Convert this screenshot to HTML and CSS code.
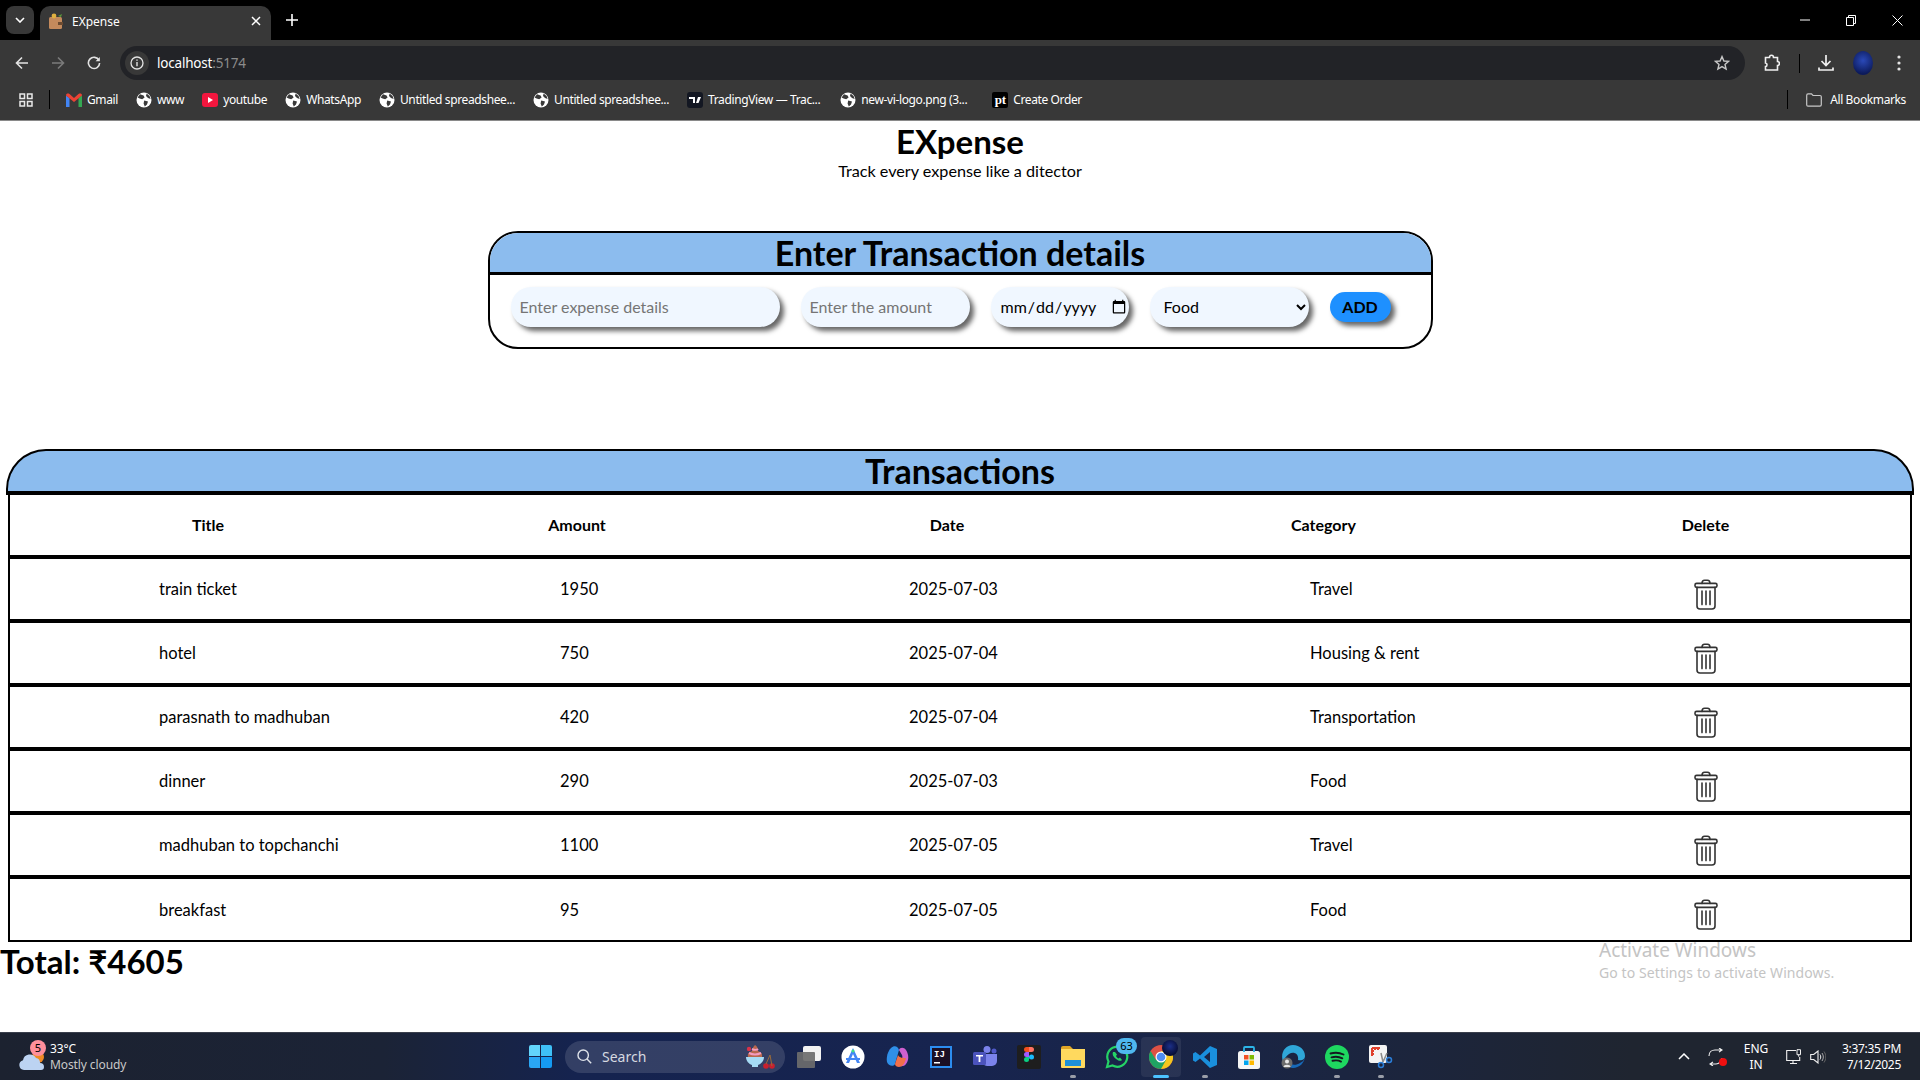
FILE: index.html
```html
<!DOCTYPE html>
<html lang="en">

<head>
  <meta charset="UTF-8">
  <meta name="viewport" content="width=device-width, initial-scale=1.0">
  <title>EXpense</title>
  <link rel="stylesheet" href="styles.css">
</head>

<body>
  <svg class="defs" width="0" height="0">
    <symbol id="globe" viewBox="0 0 16 16">
      <circle cx="8" cy="8" r="7.5" fill="#fff" />
      <path d="M4 2.2 7.6 3.4 8.6 5.6 6.2 7.2 3.6 6.6 1.6 5.6ZM8.2 8.4 12 9.4 11 12.6 8.8 14.6 7.6 11.4ZM10.6 1.6 13.6 4 14.6 7 12 6 10 4Z" fill="#3a3a3a" />
    </symbol>
    <symbol id="trash" viewBox="0 0 24 31">
      <g fill="none" stroke="#333" stroke-width="1.6" stroke-linecap="round" stroke-linejoin="round">
        <path d="M8 4.4C8 2.4 9 1.2 10.6 1.2h2.8C15 1.2 16 2.4 16 4.4" />
        <rect x="1" y="4.4" width="22" height="4" rx="1.6" />
        <path d="M3 8.4V27c0 1.8 1.2 3 3 3h12c1.8 0 3-1.2 3-3V8.4" />
        <path d="M8 12v13.6M12 12v13.6M16 12v13.6" />
      </g>
    </symbol>
  </svg>

  <header class="browser">
    <div class="tabstrip">
      <button class="tab-search">
        <svg width="10" height="6" viewBox="0 0 10 6"><path d="M1 1l4 4 4-4" fill="none" stroke="#fff" stroke-width="1.6" /></svg>
      </button>
      <div class="tab">
        <svg class="favicon" width="14" height="16" viewBox="0 0 14 16">
          <rect x="0" y="4" width="13" height="12" rx="1.5" fill="#c48a5c" />
          <rect x="9" y="9" width="5" height="3" fill="#6b4a30" />
          <circle cx="5" cy="3" r="2.4" fill="#e0b040" />
          <path d="M9 3l4-2-1 3z" fill="#5a9a3a" />
        </svg>
        <span class="tab-title">EXpense</span>
        <svg class="tab-close" width="10" height="10" viewBox="0 0 10 10"><path d="M1 1l8 8M9 1L1 9" stroke="#fff" stroke-width="1.5" /></svg>
      </div>
      <svg class="tab-new" width="12" height="12" viewBox="0 0 12 12"><path d="M6 0v12M0 6h12" stroke="#fff" stroke-width="1.6" /></svg>
      <div class="win-controls">
        <svg width="10" height="2" viewBox="0 0 10 2"><path d="M0 1h10" stroke="#fff" /></svg>
        <svg width="10" height="11" viewBox="0 0 10 11"><path d="M.5 2.5h7v8h-7zM2.5 2.5V.5h7v8h-2" fill="none" stroke="#fff" /></svg>
        <svg width="11" height="11" viewBox="0 0 11 11"><path d="M.5.5l10 10M10.5.5l-10 10" stroke="#fff" /></svg>
      </div>
    </div>

    <div class="toolbar">
      <svg class="nav-icon" width="14" height="14" viewBox="0 0 14 14"><path d="M13 7H2M7 1.5 1.5 7 7 12.5" fill="none" stroke="#e3e3e3" stroke-width="1.6" /></svg>
      <svg class="nav-icon" width="14" height="14" viewBox="0 0 14 14"><path d="M1 7h11M7 1.5 12.5 7 7 12.5" fill="none" stroke="#7b7b7b" stroke-width="1.6" /></svg>
      <svg class="nav-icon" width="14" height="14" viewBox="0 0 14 14"><path d="M12 4.4A5.6 5.6 0 1 0 12.6 7" fill="none" stroke="#e3e3e3" stroke-width="1.6" /><path d="M12.8 1v4.2H8.6z" fill="#e3e3e3" /></svg>
      <div class="omnibox">
        <span class="site-info">
          <svg width="14" height="14" viewBox="0 0 14 14"><circle cx="7" cy="7" r="6" fill="none" stroke="#e3e3e3" stroke-width="1.3" /><path d="M7 6v4.2M7 3.6v1.2" stroke="#e3e3e3" stroke-width="1.4" /></svg>
        </span>
        <span class="url">localhost<span class="url-port">:5174</span></span>
        <svg class="star" width="16" height="16" viewBox="0 0 16 16"><path d="M8 1.6 9.9 6l4.700.4-3.600 3.100 1.100 4.600L8 11.600l-4.100 2.500 1.100-4.600L1.400 6.400 6.100 6z" fill="none" stroke="#c7c7c7" stroke-width="1.4" /></svg>
      </div>
      <div class="toolbar-actions">
        <svg class="act-ext" width="16" height="18" viewBox="0 0 16 18"><path d="M1.500 3.500h4c0-3 4-3 4 0h4v4c2.500 0 2.500 4 0 4v4.500h-12v-3.500c2 0 2-3.500 0-3.500z" fill="none" stroke="#f0f0f0" stroke-width="1.6" /></svg>
        <span class="act-sep"></span>
        <svg class="act-down" width="16" height="18" viewBox="0 0 16 18"><path d="M8 1v10M3.500 7 8 11.500 12.500 7M1 13.500v2.500h14v-2.500" fill="none" stroke="#f0f0f0" stroke-width="1.7" /></svg>
        <span class="avatar"></span>
        <svg class="act-more" width="4" height="16" viewBox="0 0 4 16"><circle cx="2" cy="2" r="1.6" fill="#e3e3e3" /><circle cx="2" cy="8" r="1.6" fill="#e3e3e3" /><circle cx="2" cy="14" r="1.6" fill="#e3e3e3" /></svg>
      </div>
    </div>

    <nav class="bookmarks">
      <svg class="bm-apps" width="14" height="14" viewBox="0 0 14 14"><path d="M1 1h4.500v4.500H1zM8.500 1H13v4.500H8.500zM1 8.500h4.500V13H1zM8.500 8.500H13V13H8.500z" fill="none" stroke="#e8e8e8" stroke-width="1.5" /></svg>
      <span class="bm-sep"></span>
      <a class="bm">
        <svg width="16" height="14" viewBox="0 0 16 14"><path d="M0 2.500V14h3.500V5z" fill="#4285f4" /><path d="M16 2.500V14h-3.500V5z" fill="#34a853" /><path d="M0 2.500C0 .5 2 0 3.500 1L8 5l4.500-4C14 0 16 .5 16 2.500L8 9z" fill="#ea4335" /></svg>
        Gmail
      </a>
      <a class="bm"><svg width="16" height="16"><use href="#globe" /></svg>www</a>
      <a class="bm">
        <svg width="16" height="14" viewBox="0 0 16 14"><rect width="16" height="14" rx="3" fill="#f2163e" /><path d="M6 4l5 3-5 3z" fill="#fff" /></svg>
        youtube
      </a>
      <a class="bm"><svg width="16" height="16"><use href="#globe" /></svg>WhatsApp</a>
      <a class="bm"><svg width="16" height="16"><use href="#globe" /></svg>Untitled spreadshee...</a>
      <a class="bm"><svg width="16" height="16"><use href="#globe" /></svg>Untitled spreadshee...</a>
      <a class="bm">
        <svg width="16" height="16" viewBox="0 0 16 16"><rect width="16" height="16" rx="3" fill="#131722" /><path d="M2 5h6v6H6V7H2zM11 5h3l-2.500 6H9z" fill="#fff" /></svg>
        TradingView — Trac...
      </a>
      <a class="bm bm-vi"><svg width="16" height="16"><use href="#globe" /></svg>new-vi-logo.png (3...</a>
      <a class="bm bm-pt">
        <span class="pt-logo">pt</span>
        Create Order
      </a>
      <span class="bm-sep bm-sep-end"></span>
      <a class="bm bm-all">
        <svg width="16" height="14" viewBox="0 0 16 14"><path d="M.7 2.500C.7 1.400 1.300.8 2 .8h3.500L7 2.500h7c.8 0 1.300.6 1.300 1.300v8c0 .8-.6 1.400-1.300 1.400H2c-.8 0-1.300-.6-1.300-1.400z" fill="none" stroke="#c7c7c7" stroke-width="1.2" /></svg>
        All Bookmarks
      </a>
    </nav>
  </header>

  <main class="page">
    <h1 class="app-title">EXpense</h1>
    <p class="app-sub">Track every expense like a ditector</p>

    <section class="form-card">
      <h2 class="form-head">Enter Transaction details</h2>
      <form class="form-row">
        <input class="field field-title" type="text" placeholder="Enter expense details">
        <input class="field field-amount" type="text" placeholder="Enter the amount">
        <input class="field field-date" type="date">
        <select class="field field-cat">
          <option>Food</option>
          <option>Travel</option>
          <option>Transportation</option>
          <option>Housing &amp; rent</option>
        </select>
        <button class="add-btn" type="button">ADD</button>
      </form>
    </section>

    <section class="tx">
      <h2 class="tx-head">Transactions</h2>
      <table class="tx-table">
        <colgroup>
          <col class="col-title">
          <col class="col-amount">
          <col class="col-date">
          <col class="col-cat">
          <col class="col-del">
        </colgroup>
        <thead>
          <tr>
            <th>Title</th>
            <th>Amount</th>
            <th>Date</th>
            <th>Category</th>
            <th>Delete</th>
          </tr>
        </thead>
        <tbody>
          <tr>
            <td>train ticket</td>
            <td>1950</td>
            <td>2025-07-03</td>
            <td>Travel</td>
            <td><svg class="trash" width="24" height="31"><use href="#trash" /></svg></td>
          </tr>
          <tr>
            <td>hotel</td>
            <td>750</td>
            <td>2025-07-04</td>
            <td>Housing &amp; rent</td>
            <td><svg class="trash" width="24" height="31"><use href="#trash" /></svg></td>
          </tr>
          <tr>
            <td>parasnath to madhuban</td>
            <td>420</td>
            <td>2025-07-04</td>
            <td>Transportation</td>
            <td><svg class="trash" width="24" height="31"><use href="#trash" /></svg></td>
          </tr>
          <tr>
            <td>dinner</td>
            <td>290</td>
            <td>2025-07-03</td>
            <td>Food</td>
            <td><svg class="trash" width="24" height="31"><use href="#trash" /></svg></td>
          </tr>
          <tr>
            <td>madhuban to topchanchi</td>
            <td>1100</td>
            <td>2025-07-05</td>
            <td>Travel</td>
            <td><svg class="trash" width="24" height="31"><use href="#trash" /></svg></td>
          </tr>
          <tr>
            <td>breakfast</td>
            <td>95</td>
            <td>2025-07-05</td>
            <td>Food</td>
            <td><svg class="trash" width="24" height="31"><use href="#trash" /></svg></td>
          </tr>
        </tbody>
      </table>
    </section>

    <h2 class="total">Total: ₹4605</h2>

    <div class="activate">
      <div class="activate-big">Activate Windows</div>
      <div class="activate-small">Go to Settings to activate Windows.</div>
    </div>
  </main>

  <footer class="taskbar">
    <div class="weather">
      <svg class="weather-icon" width="26" height="28" viewBox="0 0 26 28">
        <circle cx="19" cy="14" r="6" fill="#f08a24" />
        <path d="M5 27a5 5 0 0 1-1-9.800A7 7 0 0 1 17 15a5 5 0 0 1 4 5 4 4 0 0 1 4 4c0 2-1 3-3 3z" fill="#bcd3f2" />
      </svg>
      <span class="weather-badge">5</span>
      <div class="weather-text">
        <div class="weather-temp">33°C</div>
        <div class="weather-desc">Mostly cloudy</div>
      </div>
    </div>

    <svg class="start" width="23" height="23" viewBox="0 0 23 23">
      <path d="M0 2a2 2 0 0 1 2-2h9v11H0z" fill="#63d5fb" />
      <path d="M12 0h9a2 2 0 0 1 2 2v9H12z" fill="#3fc0f7" />
      <path d="M0 12h11v11H2a2 2 0 0 1-2-2z" fill="#2aa6f4" />
      <path d="M12 12h11v9a2 2 0 0 1-2 2h-9z" fill="#159af2" />
    </svg>

    <div class="search">
      <svg width="15" height="15" viewBox="0 0 15 15"><circle cx="6.2" cy="6.2" r="5.2" fill="none" stroke="#dfe3ea" stroke-width="1.4" /><path d="M10 10l4.200 4.200" stroke="#dfe3ea" stroke-width="1.4" /></svg>
      <span class="search-text">Search</span>
      <svg class="search-art" width="30" height="26" viewBox="0 0 30 26">
        <path d="M1 13h18c0 4-3 7-6 8v2H7v-2c-3-1-6-4-6-8z" fill="#a6dcf5" />
        <path d="M3 13c-1-4 2-5 4-6 0-3 2-5 3-6 2 1 3 3 3 6 2 1 5 2 4 6z" fill="#b8684e" />
        <path d="M4 9c4 2 8 2 12 0M7 5c2 1 5 1 6 0" stroke="#f49cc0" stroke-width="2" fill="none" />
        <circle cx="4" cy="5" r="2.2" fill="#d8324a" />
        <circle cx="21" cy="22" r="2.8" fill="#c8202e" />
        <circle cx="27" cy="22" r="2.8" fill="#c8202e" />
        <path d="M21 20l4-9 2 11" stroke="#9a6a3a" fill="none" />
      </svg>
    </div>

    <div class="tb-apps">
      <span class="tb-app">
        <svg width="24" height="22" viewBox="0 0 24 22"><rect x="6" y="0" width="18" height="15" rx="2" fill="#f2f2f2" /><rect x="0" y="6" width="18" height="16" rx="1" fill="#6d6d6d" opacity=".92" /></svg>
      </span>
      <span class="tb-app">
        <svg width="24" height="24" viewBox="0 0 24 24"><circle cx="12" cy="12" r="11.5" fill="#fff" /><path d="M12 3l7 15h-3l-4-9-4 9H5z" fill="#4285f4" /><path d="M5 13h14v2H5z" fill="#4285f4" /><circle cx="12" cy="6" r="1.5" fill="#3ddc84" /></svg>
      </span>
      <span class="tb-app">
        <svg width="24" height="24" viewBox="0 0 24 24"><path d="M6 3c3-3 7-2 8 2l-4 14c-1 3-7 2-8-2-1-5 1-11 4-14z" fill="#2f8fe8" /><path d="M14 5c1-3 5-3 7 0 3 5 3 10 0 14-2 3-7 3-9 0l2-4c3 0 4-2 3-5z" fill="#d060d0" /><path d="M10 19l3-9c1 3 6 3 8 3-1 6-4 9-7 9-2 0-4-1-4-3z" fill="#f2704a" /></svg>
      </span>
      <span class="tb-app">
        <svg width="22" height="22" viewBox="0 0 22 22"><rect width="22" height="22" fill="#2c8df0" /><rect x="2" y="2" width="18" height="18" fill="#1b0f24" /><text class="ij-text" x="4" y="11">IJ</text><path d="M4 16h6v1.500H4z" fill="#fff" /></svg>
      </span>
      <span class="tb-app">
        <svg width="24" height="22" viewBox="0 0 24 22"><circle cx="14" cy="3.5" r="3.5" fill="#7b83eb" /><circle cx="21" cy="5" r="2.5" fill="#5059c9" /><path d="M9 8h15v7a5 5 0 0 1-5 5h-5a5 5 0 0 1-5-5z" fill="#7b83eb" /><rect x="0" y="6" width="13" height="13" rx="1.5" fill="#4b53bc" /><path d="M3 9h7v1.600H7.400V16H5.600v-5.400H3z" fill="#fff" /></svg>
      </span>
      <span class="tb-app">
        <svg width="24" height="24" viewBox="0 0 24 24"><rect width="24" height="24" rx="2" fill="#1e1e1e" /><path d="M7 2h5v5H9.500a2.500 2.500 0 0 1 0-5z" fill="#f24e1e" /><path d="M12 2h2.500a2.500 2.500 0 0 1 0 5H12z" fill="#ff7262" /><circle cx="14.5" cy="12" r="2.5" fill="#1abcfe" /><path d="M9.500 7H12v5H9.500a2.500 2.500 0 0 1 0-5z" fill="#a259ff" /><path d="M9.500 12H12v2.500a2.500 2.500 0 1 1-2.500-2.500z" fill="#0acf83" /></svg>
      </span>
      <span class="tb-app tb-run">
        <svg width="24" height="22" viewBox="0 0 24 22"><path d="M0 2a2 2 0 0 1 2-2h7l3 3H0z" fill="#e0a526" /><path d="M0 3h24v18a1 1 0 0 1-1 1H1a1 1 0 0 1-1-1z" fill="#ffd95e" /><path d="M4 14h16v6H4z" fill="#1e90d8" /></svg>
      </span>
      <span class="tb-app">
        <svg width="24" height="24" viewBox="0 0 24 24"><path d="M2 22l1.500-5.500A10 10 0 1 1 7.500 20.500z" fill="none" stroke="#25d366" stroke-width="2.2" /><path d="M8 7c-1 2 0 5 3 7s4.500 2.500 6 1l-2-2.500-1.500 1c-1-.4-2-1.500-2.500-2.500l1-1.500L10 7z" fill="#25d366" /></svg>
        <span class="tb-badge">63</span>
      </span>
      <span class="tb-app tb-active">
        <svg width="24" height="24" viewBox="0 0 24 24"><circle cx="12" cy="12" r="12" fill="#db4437" /><path d="M12 24A12 12 0 0 0 22.400 6H12z" fill="#f4c20d" /><path d="M1.600 6A12 12 0 0 0 12 24l5-9H7z" fill="#0f9d58" /><circle cx="12" cy="12" r="5.5" fill="#fff" /><circle cx="12" cy="12" r="4.3" fill="#4285f4" /></svg>
        <span class="chrome-avatar"></span>
      </span>
      <span class="tb-app tb-run">
        <svg width="24" height="24" viewBox="0 0 24 24"><path d="M17 1l7 3v16l-7 3-10-9.500-4.500 3.500L0 15.500V8.500L2.500 7 7 10.500zM17 7l-6 5 6 5z" fill="#1a8fdc" /></svg>
      </span>
      <span class="tb-app">
        <svg width="24" height="24" viewBox="0 0 24 24"><rect x="1" y="6" width="22" height="18" rx="2.5" fill="#f5f5f5" /><path d="M7 7V3a1 1 0 0 1 1-1h8a1 1 0 0 1 1 1v4" fill="none" stroke="#2cb5e8" stroke-width="1.8" /><path d="M7 10h4.500v4.500H7z" fill="#f25022" /><path d="M12.500 10H17v4.500h-4.500z" fill="#7fba00" /><path d="M7 15.500h4.500V20H7z" fill="#00a4ef" /><path d="M12.500 15.500H17V20h-4.500z" fill="#ffb900" /></svg>
      </span>
      <span class="tb-app">
        <svg width="24" height="24" viewBox="0 0 24 24"><path d="M12 0c7 0 12 5 12 11 0 4-4 5-7 4 1-6-4-9-9-6C5 11 3 14 2 17-1 8 4 0 12 0z" fill="#2fa7d8" /><path d="M24 11c0 7-6 12-12 12-5 0-6-4-5-6 2 3 8 4 12 1 2-1 5-3 5-7z" fill="#1769b8" /><circle cx="6" cy="18" r="5.5" fill="#6d6d6d" /><circle cx="6" cy="16.5" r="2" fill="#e8e8e8" /><path d="M2.500 22c0-3 7-3 7 0z" fill="#e8e8e8" /></svg>
      </span>
      <span class="tb-app tb-run">
        <svg width="24" height="24" viewBox="0 0 24 24"><circle cx="12" cy="12" r="12" fill="#1ed760" /><path d="M5.500 8.500c4.500-1.300 9-1 13 1M6.500 12.300c3.700-1 7.500-.8 10.800 1M7.500 15.800c3-.7 6-.6 8.500.8" fill="none" stroke="#14191f" stroke-width="1.9" stroke-linecap="round" /></svg>
      </span>
      <span class="tb-app tb-run">
        <svg width="24" height="24" viewBox="0 0 24 24"><rect x="0" y="0" width="18" height="18" rx="2" fill="#f4f4f4" /><path d="M3 3h8M3 3v8M3 6h2M3 9h2M6 3v2M9 3v2" stroke="#e0402c" stroke-width="2" fill="none" /><path d="M12 8l2 9M18 8l-4 9" stroke="#8a8a8a" stroke-width="1.5" /><circle cx="12" cy="20" r="2.5" fill="none" stroke="#2b7ed8" stroke-width="1.5" /><circle cx="20" cy="15" r="2.5" fill="none" stroke="#2b7ed8" stroke-width="1.5" /></svg>
      </span>
    </div>

    <div class="tray">
      <svg class="tray-chevron" width="12" height="7" viewBox="0 0 12 7"><path d="M1 6l5-5 5 5" fill="none" stroke="#fff" stroke-width="1.5" /></svg>
      <span class="tray-sync">
        <svg width="16" height="18" viewBox="0 0 16 18"><path d="M1 8c0-4 3-6 6-6h7M11 0l3 2-3 2M14 10c0 3-3 6-6 6H2M5 14l-3 2 3 2" fill="none" stroke="#f0f0f0" stroke-width="1.1" /></svg>
        <span class="tray-dot"></span>
      </span>
      <div class="tray-lang">
        <div>ENG</div>
        <div>IN</div>
      </div>
      <svg class="tray-net" width="16" height="16" viewBox="0 0 16 16"><path d="M10 1.500H.7v10h13V8M4 14.500h7M7 11.500v3" fill="none" stroke="#f0f0f0" stroke-width="1.1" /><path d="M11 .7h3.500v5H11zM12.700 5.700v2" fill="none" stroke="#f0f0f0" stroke-width="1" /></svg>
      <svg class="tray-vol" width="16" height="14" viewBox="0 0 16 14"><path d="M.7 4.500h3L8 1v12L3.700 9.500h-3z" fill="none" stroke="#f0f0f0" stroke-width="1.1" /><path d="M10 4.500c1 1.500 1 3.500 0 5" fill="none" stroke="#f0f0f0" /><path d="M12 3c1.800 2.500 1.800 5.500 0 8" fill="none" stroke="#aaa" /><path d="M14 1.500c2.400 3.500 2.400 7.500 0 11" fill="none" stroke="#666" /></svg>
      <div class="tray-clock">
        <div>3:37:35 PM</div>
        <div>7/12/2025</div>
      </div>
    </div>
  </footer>
</body>

</html>
```

FILE: styles.css
```css
* {
  box-sizing: border-box;
}

body {
  background: #fff;
  color: #000;
  display: flex;
  flex-direction: column;
  font-family: Lato, "Noto Sans", sans-serif;
  height: 1080px;
  margin: 0;
  overflow: hidden;
}

.defs {
  position: absolute;
}

/* browser chrome */
.browser {
  background: #383838;
  border-bottom: 1px solid #8a8a8a;
  color: #fff;
  flex: none;
  font-family: "Noto Sans", sans-serif;
  height: 121px;
}

.tabstrip {
  align-items: flex-start;
  background: #000;
  display: flex;
  height: 40px;
  padding: 6px 17px 0 6px;
}

.tab-search {
  align-items: center;
  background: #383838;
  border: 0;
  border-radius: 8px;
  display: flex;
  height: 28px;
  justify-content: center;
  padding: 0;
  width: 28px;
}

.tab {
  align-items: center;
  background: #383838;
  border-radius: 10px 10px 0 0;
  display: flex;
  font-size: 12px;
  height: 34px;
  margin-left: 6px;
  padding: 0 10px 4px 9px;
  width: 231px;
}

.tab-title {
  flex: 1;
  margin-left: 9px;
}

.tab-new {
  margin: 8px 0 0 15px;
}

.win-controls {
  align-items: center;
  display: flex;
  gap: 36px;
  height: 28px;
  margin-left: auto;
}

.toolbar {
  align-items: center;
  display: flex;
  height: 40px;
  padding: 6px 0 0 15px;
}

.nav-icon {
  margin-right: 22px;
}

.omnibox {
  align-items: center;
  background: #222327;
  border-radius: 17px;
  display: flex;
  font-size: 13.5px;
  height: 34px;
  margin-left: -3px;
  padding: 0 15px 0 5px;
  width: 1625px;
}

.site-info {
  align-items: center;
  background: #383838;
  border-radius: 50%;
  display: flex;
  height: 24px;
  justify-content: center;
  width: 24px;
}

.url {
  flex: 1;
  letter-spacing: -0.2px;
  margin-left: 8px;
}

.url-port {
  color: #8c8c8c;
}

.toolbar-actions {
  align-items: center;
  display: flex;
  flex: 1;
}

.act-ext {
  margin-left: 19px;
}

.act-sep {
  background: #000;
  height: 19px;
  margin-left: 19px;
  width: 1px;
}

.act-down {
  margin-left: 18px;
}

.avatar {
  background: radial-gradient(circle at 50% 40%, #2a49b8, #0c1a5a 75%);
  border-radius: 50%;
  height: 24px;
  margin-left: 19px;
  width: 20px;
}

.act-more {
  margin-left: 24px;
}

.bookmarks {
  align-items: center;
  display: flex;
  font-size: 12px;
  gap: 18px;
  height: 40px;
  letter-spacing: -0.38px;
  padding: 0 14px 1px 19px;
}

.bm {
  align-items: center;
  display: flex;
  gap: 5px;
  white-space: nowrap;
}

.bm-vi {
  margin-left: 2px;
}

.bm-pt {
  margin-left: 7px;
}

.bm-all {
  gap: 8px;
}

.bm-sep {
  background: #000;
  height: 19px;
  margin: 0 -2px;
  width: 1px;
}

.bm-sep-end {
  margin: 0 0 0 auto;
}

.pt-logo {
  align-items: center;
  background: #000;
  border-radius: 2px;
  display: flex;
  font-family: "Liberation Serif", serif;
  font-size: 13px;
  font-weight: 700;
  height: 16px;
  justify-content: center;
  width: 16px;
}

/* page */
.page {
  flex: 1;
  position: relative;
}

.app-title {
  font-size: 33px;
  font-weight: 700;
  line-height: 40px;
  margin: 0;
  text-align: center;
}

.app-sub {
  font-size: 16.2px;
  line-height: 20px;
  margin: 0;
  text-align: center;
}

.form-card {
  border: 2px solid #000;
  border-radius: 30px;
  height: 118px;
  margin: 50px auto 0;
  overflow: hidden;
  width: 945px;
}

.form-head {
  background: #8cbcee;
  border-bottom: 3px solid #000;
  font-size: 34px;
  font-weight: 700;
  height: 42px;
  line-height: 39px;
  margin: 0;
  text-align: center;
}

.form-row {
  align-items: center;
  display: flex;
  gap: 21px;
  height: 63px;
  padding-left: 21px;
}

.field {
  background: #f0f7ff;
  border: 0;
  border-radius: 20px;
  box-shadow: 4px 4px 5px #666;
  color: #000;
  font-family: inherit;
  font-size: 16px;
  height: 40px;
  outline: none;
  padding: 0 9px;
}

.field::placeholder {
  color: #757575;
}

.field-title {
  width: 269px;
}

.field-amount {
  width: 169px;
}

.field-date {
  padding-right: 0;
  width: 138px;
}

.field-cat {
  padding-left: 10px;
  width: 159px;
}

.add-btn {
  background: #1e90ff;
  border: 0;
  border-radius: 15px;
  box-shadow: 4px 4px 5px #666;
  font-family: inherit;
  font-size: 16px;
  font-weight: 700;
  height: 30px;
  padding: 0;
  width: 61px;
}

.tx {
  margin: 100px 6px 0;
}

.tx-head {
  background: #8cbcee;
  border: 2px solid #000;
  border-bottom: 4px solid #000;
  border-radius: 40px 40px 0 0;
  font-size: 34px;
  font-weight: 700;
  height: 46px;
  line-height: 40px;
  margin: 0;
  text-align: center;
}

.tx-table {
  border: 2px solid #000;
  border-collapse: collapse;
  border-top: 0;
  font-size: 16.5px;
  margin-left: 2px;
  table-layout: fixed;
  width: 1904px;
}

.col-title {
  width: 397px;
}

.col-amount {
  width: 342px;
}

.col-date {
  width: 398px;
}

.col-cat {
  width: 355px;
}

.tx-table th {
  font-size: 16px;
  font-weight: 700;
  height: 62px;
  padding: 0 0 2px;
}

.tx-table tr {
  border-bottom: 4px solid #000;
}

.tx-table tbody tr:last-child {
  border-bottom: 0;
}

.tx-table td {
  height: 64px;
  padding: 0;
}

.tx-table td:nth-child(1) {
  padding-left: 149px;
}

.tx-table td:nth-child(2) {
  padding-left: 154px;
}

.tx-table td:nth-child(3) {
  padding-left: 161px;
}

.tx-table td:nth-child(4) {
  padding-left: 164px;
}

.tx-table td:nth-child(5) {
  text-align: center;
}

.trash {
  display: inline-block;
  margin-top: 10px;
  vertical-align: middle;
}

.total {
  font-size: 33px;
  font-weight: 700;
  line-height: 39px;
  margin: 0;
}

.activate {
  color: #c4c4c4;
  font-family: "Noto Sans", sans-serif;
  left: 1599px;
  position: absolute;
  top: 816px;
}

.activate-big {
  font-size: 19px;
  line-height: 27px;
}

.activate-small {
  font-size: 14px;
  letter-spacing: 0.1px;
  line-height: 18px;
}

/* windows taskbar */
.taskbar {
  align-items: center;
  background: linear-gradient(90deg, #1c2230 0, #1b2336 20%, #15234f 30%, #17244f 50%, #1b2540 70%, #1f2530 85%);
  border-top: 1px solid #3a3f4c;
  color: #fff;
  display: flex;
  flex: none;
  font-family: "Noto Sans", sans-serif;
  height: 48px;
}

.weather {
  align-items: center;
  display: flex;
  margin-left: 19px;
  position: relative;
  width: 510px;
}

.weather-badge {
  background: #ff8f9b;
  border-radius: 50%;
  color: #000;
  font-size: 11px;
  height: 16px;
  left: 11px;
  line-height: 16px;
  position: absolute;
  text-align: center;
  top: -1px;
  width: 16px;
}

.weather-text {
  font-size: 12px;
  letter-spacing: -0.1px;
  line-height: 16px;
  margin-left: 5px;
}

.weather-desc {
  color: #c8c8c8;
}

.start {
  flex: none;
}

.search {
  align-items: center;
  background: rgba(255, 255, 255, 0.13);
  border-radius: 16px;
  display: flex;
  height: 32px;
  margin-left: 13px;
  padding: 0 10px 0 12px;
  width: 220px;
}

.search-text {
  color: #d6d9e0;
  flex: 1;
  font-size: 14px;
  margin-left: 10px;
}

.tb-apps {
  align-items: center;
  display: flex;
  gap: 20px;
  margin-left: 12px;
}

.tb-app {
  align-items: center;
  display: flex;
  height: 24px;
  justify-content: center;
  position: relative;
  width: 24px;
}

.tb-run::after,
.tb-active::after {
  background: #9a9ea8;
  border-radius: 2px;
  bottom: -9px;
  content: "";
  height: 3px;
  left: 9px;
  position: absolute;
  width: 6px;
}

.tb-active::before {
  background: rgba(255, 255, 255, 0.07);
  border-radius: 4px;
  content: "";
  inset: -8px -8px -8px -8px;
  position: absolute;
}

.tb-active::after {
  background: #4cc2ff;
  left: 4px;
  width: 16px;
}

.tb-badge {
  background: #4fb8f0;
  border-radius: 8px;
  color: #000;
  font-size: 11px;
  height: 16px;
  left: 11px;
  line-height: 16px;
  position: absolute;
  text-align: center;
  top: -7px;
  width: 21px;
}

.chrome-avatar {
  background: radial-gradient(circle at 50% 40%, #1c2f88, #060b30 75%);
  border-radius: 50%;
  height: 16px;
  position: absolute;
  right: -5px;
  top: -5px;
  width: 16px;
}

.ij-text {
  fill: #fff;
  font-family: "Liberation Mono", monospace;
  font-size: 9px;
  font-weight: 700;
}

.tray {
  align-items: center;
  display: flex;
  font-size: 12px;
  margin-left: auto;
  padding-right: 19px;
}

.tray-chevron {
  margin-right: 18px;
}

.tray-sync {
  display: flex;
  position: relative;
}

.tray-dot {
  background: #f01010;
  border-radius: 50%;
  bottom: 0;
  height: 8px;
  position: absolute;
  right: -3px;
  width: 8px;
}

.tray-lang {
  line-height: 16px;
  margin-left: 18px;
  text-align: center;
  width: 28px;
}

.tray-net {
  margin-left: 16px;
}

.tray-vol {
  margin-left: 8px;
}

.tray-clock {
  letter-spacing: -0.3px;
  line-height: 16px;
  margin-left: 15px;
  text-align: right;
  white-space: nowrap;
  width: 60px;
}
```
